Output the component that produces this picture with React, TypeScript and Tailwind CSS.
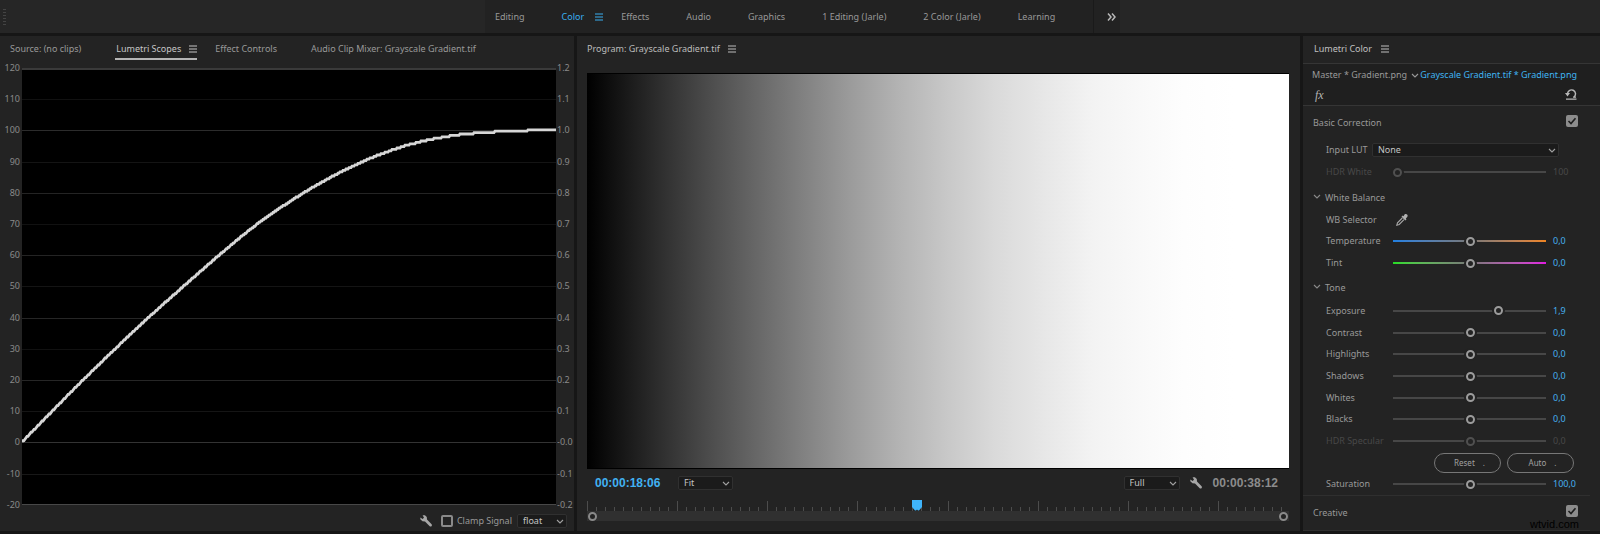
import type { ReactNode } from "react";

type SliderRow = {
  label: string;
  value: string;
  position: number;
  track?: string;
  disabled?: boolean;
};

const workspaces = ["Effects", "Audio", "Graphics", "1 Editing (Jarle)", "2 Color (Jarle)", "Learning"];

const leftScale = [120, 110, 100, 90, 80, 70, 60, 50, 40, 30, 20, 10, 0, -10, -20];
const rightScale = ["1.2", "1.1", "1.0", "0.9", "0.8", "0.7", "0.6", "0.5", "0.4", "0.3", "0.2", "0.1", "-0.0", "-0.1", "-0.2"];
const lineColors = ["#3a3a3a", "#111111", "#2c2c2c", "#141414", "#242424", "#111111", "#242424", "#141414", "#262626", "#111111", "#262626", "#151515", "#333333", "#181818", "#484848"];

const whiteBalance: SliderRow[] = [
  { label: "Temperature", value: "0,0", position: 51, track: "bg-linear-to-r from-[#1f7fe0] via-[#777777] to-[#ee8420]" },
  { label: "Tint", value: "0,0", position: 51, track: "bg-linear-to-r from-[#22dd22] via-[#777777] to-[#e016e0]" },
];

const tone: SliderRow[] = [
  { label: "Exposure", value: "1,9", position: 70 },
  { label: "Contrast", value: "0,0", position: 51 },
  { label: "Highlights", value: "0,0", position: 51 },
  { label: "Shadows", value: "0,0", position: 51 },
  { label: "Whites", value: "0,0", position: 51 },
  { label: "Blacks", value: "0,0", position: 51 },
  { label: "HDR Specular", value: "0,0", position: 51, disabled: true },
];

// [x, y] samples of the luma trace inside the 534x437 scope
const tracePoints = [
  [0, 374], [52, 321], [93, 281], [126, 250], [163, 217], [200, 184.7], [237, 154.7], [274, 129.7],
  [311, 108], [348, 90.5], [385, 77.3], [422, 69], [455, 65], [493, 63], [534, 61.5],
];

// Catmull-Rom through the samples, quantised to the 8 bit levels of the clip
function buildTrace() {
  const step = 1.4;
  const last = tracePoints.length - 1;
  let path = "";
  let segment = 0;
  for (let x = 0; x <= 534; x++) {
    while (segment < last - 1 && x > tracePoints[segment + 1][0]) segment++;
    const [x1, y1] = tracePoints[segment];
    const [x2, y2] = tracePoints[segment + 1];
    const [x0, y0] = tracePoints[Math.max(segment - 1, 0)];
    const [x3, y3] = tracePoints[Math.min(segment + 2, last)];
    const width = x2 - x1;
    const m1 = ((y2 - y0) / (x2 - x0)) * width;
    const m2 = ((y3 - y1) / (x3 - x1)) * width;
    const t = (x - x1) / width;
    const y =
      (2 * t ** 3 - 3 * t ** 2 + 1) * y1 +
      (t ** 3 - 2 * t ** 2 + t) * m1 +
      (3 * t ** 2 - 2 * t ** 3) * y2 +
      (t ** 3 - t ** 2) * m2;
    const level = 374 - Math.round((374 - y) / step) * step;
    path += `${x === 0 ? "M" : "L"}${x} ${level.toFixed(1)}`;
  }
  return path;
}

function MenuIcon() {
  return (
    <svg viewBox="0 0 8 8" className="h-2 w-2" aria-hidden="true">
      <path d="M0 1h8M0 4h8M0 7h8" stroke="currentColor" strokeWidth="1" />
    </svg>
  );
}

function Chevron({ className = "" }: { className?: string }) {
  return (
    <svg viewBox="0 0 8 5" className={`h-[5px] w-2 ${className}`} aria-hidden="true">
      <path d="M1 1l3 3 3-3" fill="none" stroke="currentColor" strokeWidth="1.1" />
    </svg>
  );
}

function Wrench() {
  return (
    <svg viewBox="0 0 12 12" className="h-3 w-3" aria-hidden="true">
      <path
        d="M2.6.3 4.9.2 6.8 2l.2 2.4 4.6 4.9c.5.6.4 1.4-.1 1.9-.5.5-1.3.5-1.8 0L5 6.5 2.5 6.3.3 4.2.4 2.4 2.5 3.9 4 2.7Z"
        fill="#a6a6a6"
      />
    </svg>
  );
}

function Dropdown({ label, value, className }: { label: string; value: string; className: string }) {
  return (
    <div className={`relative ${className}`}>
      <select
        aria-label={label}
        className="h-[14px] w-full appearance-none rounded-xs border border-[#303030] bg-[#1b1b1b] pl-[5px] leading-3 text-[#c4c4c4]"
      >
        <option>{value}</option>
      </select>
      <Chevron className="pointer-events-none absolute top-[5px] right-[3px] text-[#a0a0a0]" />
    </div>
  );
}

function Tick({ label }: { label: string }) {
  return (
    <label className="relative block h-3 w-3">
      <input type="checkbox" defaultChecked aria-label={label} className="block h-3 w-3 appearance-none rounded-xs bg-[#8c8c8c]" />
      <svg viewBox="0 0 12 12" className="pointer-events-none absolute inset-0 h-3 w-3" aria-hidden="true">
        <path d="M2.5 6 5 8.5 9.5 3.2" fill="none" stroke="#1d1d1d" strokeWidth="1.6" />
      </svg>
    </label>
  );
}

function Slider({ label, value, position, track = "bg-[#474747]", disabled = false }: SliderRow) {
  const id = label.toLowerCase().replace(/ /g, "-");
  return (
    <div className={`flex flex-1 items-center pl-[23px] ${disabled ? "text-[#484848]" : ""}`}>
      <label htmlFor={id} className="w-[67px] shrink-0 whitespace-nowrap">
        {label}
      </label>
      <div className="relative flex h-3 flex-1 items-center">
        <div className={`absolute inset-x-0 h-[2px] ${track}`} />
        <input
          id={id}
          type="range"
          defaultValue={position}
          disabled={disabled}
          className="relative h-3 w-full appearance-none bg-transparent [&::-webkit-slider-thumb]:h-[9px] [&::-webkit-slider-thumb]:w-[9px] [&::-webkit-slider-thumb]:appearance-none [&::-webkit-slider-thumb]:rounded-full [&::-webkit-slider-thumb]:border-2 [&::-webkit-slider-thumb]:border-[#9c9c9c] [&::-webkit-slider-thumb]:bg-[#232323] [&::-webkit-slider-thumb]:shadow-[0_0_0_2px_#232323] disabled:[&::-webkit-slider-thumb]:border-[#505050]"
        />
      </div>
      <output htmlFor={id} className={`w-[54px] shrink-0 pl-[7px] ${disabled ? "" : "text-[#45b0ee]"}`}>
        {value}
      </output>
    </div>
  );
}

function SectionToggle({ children }: { children: ReactNode }) {
  return (
    <button type="button" className="flex h-6 items-center gap-1 pl-[10px]">
      <Chevron className="mb-1 text-[#8a8a8a]" />
      {children}
    </button>
  );
}

function WorkspaceBar() {
  return (
    <header className="grid h-[33px] grid-cols-[485fr_635fr_480fr] bg-[#262626]">
      <div className="flex items-center pl-[3px]">
        <div className="h-4 w-[3px] bg-[repeating-linear-gradient(#444444_0_1px,#262626_1px_3px)]" />
      </div>
      <nav className="flex items-center bg-[#222222] whitespace-nowrap">
        <button type="button" className="pr-[19px] pl-[10px]">Editing</button>
        <button type="button" className="flex items-center gap-[11px] pl-[18px] text-[#39aef0]">
          Color
          <MenuIcon />
        </button>
        {workspaces.map((item) => (
          <button key={item} type="button" className="pr-[19px] pl-[18px]">
            {item}
          </button>
        ))}
        <button type="button" aria-label="More workspaces" className="ml-auto flex h-full items-center border-l border-[#1a1a1a] pr-1 pl-[13px]">
          <svg viewBox="0 0 9 8" className="h-2 w-[9px]" aria-hidden="true">
            <path d="M1 .5 4 4 1 7.5M5 .5 8 4 5 7.5" fill="none" stroke="#b8b8b8" strokeWidth="1.5" />
          </svg>
        </button>
      </nav>
    </header>
  );
}

function ScopesPanel() {
  return (
    <section className="flex min-w-0 flex-col overflow-hidden bg-[#232323]">
      <div className="flex h-[26px] items-center pb-px pl-[10px] whitespace-nowrap">
        <button type="button" className="mr-[34px]">Source: (no clips)</button>
        <button type="button" className="mt-[5px] mr-[18px] flex items-center gap-2 border-b-2 border-[#b4b4b4] pb-[3px] pl-px text-[#c6c6c6]">
          Lumetri Scopes
          <MenuIcon />
        </button>
        <button type="button" className="mr-[34px]">Effect Controls</button>
        <button type="button">Audio Clip Mixer: Grayscale Gradient.tif</button>
      </div>
      <div className="flex flex-1">
        <div className="flex w-[22px] flex-col justify-between pr-[2px] text-right leading-3 text-[#8a8a8a]">
          {leftScale.map((mark) => (
            <span key={mark}>{mark}</span>
          ))}
        </div>
        <div className="relative my-[6px] flex-1">
          <svg viewBox="0 0 534 437" preserveAspectRatio="none" className="absolute inset-0 h-full w-full bg-black" aria-hidden="true">
            {lineColors.map((color, i) => (
              <rect key={i} x="0" y={Math.min(Math.round(i * 31.2), 436)} width="534" height={i === 0 ? 2 : 1} fill={color} />
            ))}
            <path d={buildTrace()} fill="none" stroke="#d6d6d6" strokeWidth="2.8" />
          </svg>
        </div>
        <div className="flex w-[18px] flex-col justify-between pl-px leading-3 whitespace-nowrap text-[#8a8a8a]">
          {rightScale.map((mark) => (
            <span key={mark}>{mark}</span>
          ))}
        </div>
      </div>
      <div className="flex h-5 items-center justify-end pr-[7px]">
        <button type="button" aria-label="Scope settings" className="mr-[9px]">
          <Wrench />
        </button>
        <label className="mr-[5px] flex items-center gap-1 whitespace-nowrap">
          <input type="checkbox" className="h-3 w-3 appearance-none rounded-xs border-2 border-[#8a8a8a]" />
          Clamp Signal
        </label>
        <Dropdown label="Bit depth" value="float" className="w-[50px]" />
      </div>
    </section>
  );
}

function ProgramPanel() {
  const ticks = Array.from({ length: 78 }, (_, i) => i);
  return (
    <section className="flex min-w-0 flex-col bg-[#232323] pr-[11px] pl-[10px]">
      <div className="flex h-[26px] items-center gap-2 pb-px text-[#bcbcbc]">
        <h2>Program: Grayscale Gradient.tif</h2>
        <MenuIcon />
      </div>
      <div className="mt-[11px] flex-1 border-y border-black bg-[linear-gradient(to_right,#000_0%,#131313_4.3%,#2b2b2b_9.7%,#4c4c4c_17.4%,#656565_23.6%,#808080_30.5%,#9b9b9b_37.5%,#b3b3b3_44.4%,#c8c8c8_51.3%,#dadada_58.2%,#e7e7e7_65.2%,#f3f3f3_72.1%,#f9f9f9_79%,#fdfdfd_85%,#fff_92%)]" />
      <div className="flex h-[27px] items-center font-['Liberation_Sans',sans-serif] text-[12px] font-bold">
        <span className="w-[91px] pl-2 text-[#41b1f2]">00:00:18:06</span>
        <div className="font-['Noto_Sans',sans-serif] text-[9px] font-normal">
          <Dropdown label="Zoom level" value="Fit" className="w-[55px]" />
        </div>
        <div className="ml-auto font-['Noto_Sans',sans-serif] text-[9px] font-normal">
          <Dropdown label="Playback resolution" value="Full" className="w-[56px]" />
        </div>
        <button type="button" aria-label="Program settings" className="mr-[11px] ml-[10px]">
          <Wrench />
        </button>
        <span className="pr-[11px] text-[#8c8c8c]">00:00:38:12</span>
      </div>
      <div className="relative mt-1 h-[11px]">
        <div className="flex h-full items-end justify-between pr-[6px]">
          {ticks.map((tick) => (
            <div key={tick} className={tick % 10 === 0 ? "h-[10px] w-px bg-[#4c4c4c]" : "h-1 w-px bg-[#4c4c4c]"} />
          ))}
        </div>
        <svg viewBox="0 0 10 11" className="absolute top-0 left-[46.3%] h-[11px] w-[10px]" aria-hidden="true">
          <path d="M0 0h10v7l-3 3.5h-1L5 9.5 4 10.5H3L0 7Z" fill="#3fb4fb" />
        </svg>
      </div>
      <div className="mb-[10px] flex h-[10px] items-center justify-between bg-[#303030] px-[1px]">
        <button type="button" aria-label="Zoom start" className="h-[9px] w-[9px] rounded-full border-2 border-[#8a8a8a] bg-[#232323]" />
        <button type="button" aria-label="Zoom end" className="h-[9px] w-[9px] rounded-full border-2 border-[#8a8a8a] bg-[#232323]" />
      </div>
    </section>
  );
}

function LumetriPanel() {
  return (
    <section className="relative flex min-w-0 flex-col bg-[#232323]">
      <div className="flex h-[27px] items-center gap-[9px] pb-[2px] pl-[11px] text-[#c0c0c0]">
        <h2>Lumetri Color</h2>
        <MenuIcon />
      </div>
      <div className="border-y border-[#353535] bg-[#1f1f1f]">
        <div className="flex h-[22px] items-center pr-[23px] pl-[9px] whitespace-nowrap">
          <button type="button">Master * Gradient.png</button>
          <button type="button" aria-label="Choose clip" className="ml-1">
            <Chevron />
          </button>
          <button type="button" className="ml-auto text-[#3fb4f2]">Grayscale Gradient.tif * Gradient.png</button>
        </div>
        <div className="flex h-[19px] items-center justify-between pr-[23px] pb-[2px] pl-3">
          <button type="button" className="font-['Liberation_Serif',serif] text-[12px] leading-3 text-[#b4b4b4] italic">fx</button>
          <button type="button" aria-label="Reset effect">
            <svg viewBox="0 0 12 11" className="h-[11px] w-3" aria-hidden="true">
              <path d="M2.5 5A4 4 0 1 1 9 8" fill="none" stroke="#b8b8b8" strokeWidth="1.4" />
              <path d="M0 4h5L2.500 7.500Z" fill="#b8b8b8" />
              <path d="M1 10.2h10.5M8 8.2h3" stroke="#b8b8b8" strokeWidth="1.3" />
            </svg>
          </button>
        </div>
      </div>
      <div className="flex h-[33px] items-center justify-between pr-[22px] pl-[10px]">
        <h3>Basic Correction</h3>
        <div className="pb-1">
          <Tick label="Enable Basic Correction" />
        </div>
      </div>
      <div className="flex h-[22px] items-center pr-[41px] pl-[23px]">
        <span className="w-[46px] whitespace-nowrap">Input LUT</span>
        <Dropdown label="Input LUT" value="None" className="flex-1" />
      </div>
      <div className="flex h-[22px]">
        <Slider label="HDR White" value="100" position={0} disabled />
      </div>
      <div className="mt-[3px] flex">
        <SectionToggle>White Balance</SectionToggle>
      </div>
      <div className="flex h-[19px] items-center pl-[23px]">
        <span className="w-[70px]">WB Selector</span>
        <button type="button" aria-label="Pick white balance">
          <svg viewBox="0 0 12 12" className="h-3 w-3" aria-hidden="true">
            <path d="M8.5.5c1-.8 2.3-.5 2.8.2.5.8.5 1.800-.3 2.500L9.800 4.500l.7.8-1.200 1.200L5.500 2.800 6.700 1.600l.8.7Z" fill="#b0b0b0" />
            <path d="M6.300 4 1.500 8.800.8 11.200 3.200 10.500 8 5.700" fill="none" stroke="#a8a8a8" strokeWidth="1.1" />
          </svg>
        </button>
      </div>
      <div className="mt-px flex h-11 flex-col">
        {whiteBalance.map((row) => (
          <Slider key={row.label} {...row} />
        ))}
      </div>
      <div className="mt-[2px] flex">
        <SectionToggle>Tone</SectionToggle>
      </div>
      <div className="flex h-[152px] flex-col">
        {tone.map((row) => (
          <Slider key={row.label} {...row} />
        ))}
      </div>
      <div className="flex justify-end gap-[6px] pt-px pr-[26px] text-[8px] text-[#a0a0a0]">
        <button type="button" className="flex h-5 w-[67px] items-center justify-center gap-2 rounded-full border border-[#777777] pl-1">
          Reset <span>.</span>
        </button>
        <button type="button" className="flex h-5 w-[67px] items-center justify-center gap-2 rounded-full border border-[#777777] pl-1">
          Auto <span>.</span>
        </button>
      </div>
      <div className="flex h-[22px]">
        <Slider label="Saturation" value="100,0" position={51} />
      </div>
      <div className="mr-[10px] flex flex-1 items-center justify-between border-y border-[#2f2f2f] pr-3 pl-[10px]">
        <h3>Creative</h3>
        <div className="pb-1">
          <Tick label="Enable Creative" />
        </div>
      </div>
      <span className="absolute right-[21px] bottom-0 font-['Liberation_Sans',sans-serif] text-[11px] leading-[14px] text-black">wtvid.com</span>
    </section>
  );
}

export default function App() {
  return (
    <div className="flex min-h-screen flex-col gap-[3px] bg-[#161616] pb-[3px] font-['Noto_Sans',sans-serif] text-[9px] leading-3 text-[#999999]">
      <WorkspaceBar />
      <main className="grid flex-1 grid-cols-[574fr_723fr_297fr] gap-[3px]">
        <ScopesPanel />
        <ProgramPanel />
        <LumetriPanel />
      </main>
    </div>
  );
}
